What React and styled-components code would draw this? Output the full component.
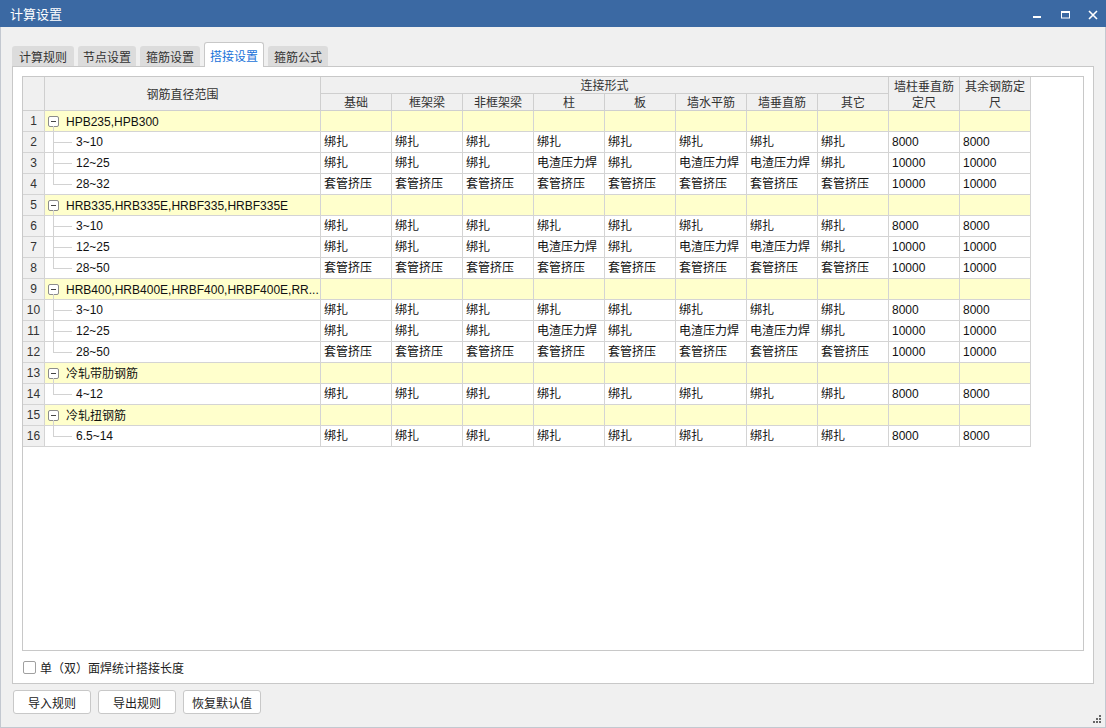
import React from 'react'
import styled, { createGlobalStyle } from 'styled-components';

const GlobalStyle = createGlobalStyle`
  html, body {
    margin: 0;
    padding: 0;
    background: #f0f0f0;
  }
  body {
    font-family: "Liberation Sans", "Noto Sans CJK SC", sans-serif;
    font-size: 12px;
    color: #1e1e1e;
  }
  * { box-sizing: border-box; }
`;

const connectCols = ['基础', '框架梁', '非框架梁', '柱', '板', '墙水平筋', '墙垂直筋', '其它'];

const small = ['绑扎', '绑扎', '绑扎', '绑扎', '绑扎', '绑扎', '绑扎', '绑扎', '8000', '8000'];
const mid = ['绑扎', '绑扎', '绑扎', '电渣压力焊', '绑扎', '电渣压力焊', '电渣压力焊', '绑扎', '10000', '10000'];
const big = ['套管挤压', '套管挤压', '套管挤压', '套管挤压', '套管挤压', '套管挤压', '套管挤压', '套管挤压', '10000', '10000'];

const groups = [
  {
    name: 'HPB235,HPB300',
    rows: [['3~10', small], ['12~25', mid], ['28~32', big]]
  },
  {
    name: 'HRB335,HRB335E,HRBF335,HRBF335E',
    rows: [['3~10', small], ['12~25', mid], ['28~50', big]]
  },
  {
    name: 'HRB400,HRB400E,HRBF400,HRBF400E,RR...',
    rows: [['3~10', small], ['12~25', mid], ['28~50', big]]
  },
  {
    name: '冷轧带肋钢筋',
    rows: [['4~12', small]]
  },
  {
    name: '冷轧扭钢筋',
    rows: [['6.5~14', small]]
  }
];

const tabs = [
  { text: '计算规则', w: 62 },
  { text: '节点设置', w: 58 },
  { text: '箍筋设置', w: 60 },
  { text: '搭接设置', w: 60 },
  { text: '箍筋公式', w: 60 }
];

const App = () => {
  let n = 0;
  return (
    <>
      <GlobalStyle />
      <Window>
        <TitleBar>
          <span>计算设置</span>
          <Controls>
            <svg width="10" height="10" viewBox="0 0 10 10">
              <rect x="1" y="6" width="8" height="2" fill="#fff" />
            </svg>
            <svg width="10" height="10" viewBox="0 0 10 10">
              <rect x="1.5" y="1.5" width="8" height="6.5" fill="none" stroke="#fff" />
              <rect x="1" y="1" width="9" height="2" fill="#fff" />
            </svg>
            <svg width="10" height="10" viewBox="0 0 10 10">
              <path d="M1 1 L9 9 M9 1 L1 9" stroke="#fff" strokeWidth="1.6" />
            </svg>
          </Controls>
        </TitleBar>
        <Body>
          <TabBar>
            {tabs.map((t, i) => (
              <Tab key={t.text} w={t.w} active={i === 3}>{t.text}</Tab>
            ))}
          </TabBar>
          <Panel>
            <Grid>
              <Table>
                <colgroup>
                  <col style={{ width: 22 }} />
                  <col style={{ width: 276 }} />
                  {Array.from({ length: 10 }).map((_, i) => <col key={i} style={{ width: 71 }} />)}
                </colgroup>
                <thead>
                  <tr>
                    <Th rowSpan={2} />
                    <Th rowSpan={2}>钢筋直径范围</Th>
                    <Th colSpan={8}>连接形式</Th>
                    <Th rowSpan={2} wrap>墙柱垂直筋定尺</Th>
                    <Th rowSpan={2} wrap>其余钢筋定尺</Th>
                  </tr>
                  <tr>
                    {connectCols.map(c => <Th key={c}>{c}</Th>)}
                  </tr>
                </thead>
                <tbody>
                  {groups.map(g => {
                    n += 1;
                    const out = [
                      <tr key={'g' + n}>
                        <NumCell>{n}</NumCell>
                        <GroupCell>
                          <ToggleBox />
                          <span>{g.name}</span>
                        </GroupCell>
                        {Array.from({ length: 10 }).map((_, i) => <Cell key={i} group />)}
                      </tr>
                    ];
                    g.rows.forEach(([range, vals], ri) => {
                      n += 1;
                      out.push(
                        <tr key={'r' + n}>
                          <NumCell>{n}</NumCell>
                          <ChildCell last={ri === g.rows.length - 1}>{range}</ChildCell>
                          {vals.map((v, i) => <Cell key={i}>{v}</Cell>)}
                        </tr>
                      );
                    });
                    return out;
                  })}
                </tbody>
              </Table>
            </Grid>
            <CheckRow>
              <CheckBox />
              <span>单（双）面焊统计搭接长度</span>
            </CheckRow>
          </Panel>
          <ButtonRow>
            <Button>导入规则</Button>
            <Button>导出规则</Button>
            <Button>恢复默认值</Button>
          </ButtonRow>
        </Body>
        <Grip width="9" height="9" viewBox="0 0 9 9">
          <rect x="6" y="0" width="2" height="2" fill="#666" />
          <rect x="3" y="3" width="2" height="2" fill="#666" />
          <rect x="6" y="3" width="2" height="2" fill="#666" />
          <rect x="0" y="6" width="2" height="2" fill="#666" />
          <rect x="3" y="6" width="2" height="2" fill="#666" />
          <rect x="6" y="6" width="2" height="2" fill="#666" />
        </Grip>
      </Window>
    </>
  );
}

const Window = styled.div`
  position: relative;
  width: 1106px;
  height: 728px;
  background: #f0f0f0;
  border: 1px solid #c3c8d0;
  border-top: none;
  display: flex;
  flex-direction: column;
`;

const TitleBar = styled.div`
  height: 27px;
  margin: 0 -1px;
  background: #3b69a3;
  color: #fff;
  font-family: "Noto Sans CJK SC", sans-serif;
  font-size: 13px;
  display: flex;
  align-items: center;
  justify-content: space-between;
  padding-left: 10px;
  padding-right: 8px;
`;

const Controls = styled.div`
  display: flex;
  gap: 18px;
  align-items: center;
  padding-top: 2px;
  svg { display: block; }
`;

const Body = styled.div`
  padding: 15px 11px 0 11px;
`;

const TabBar = styled.div`
  display: flex;
  align-items: flex-end;
  gap: 4px;
  height: 24px;
  position: relative;
  z-index: 1;
`;

const Tab = styled.div`
  width: ${p => p.w}px;
  height: ${p => (p.active ? '25px' : '20px')};
  margin-bottom: ${p => (p.active ? '-1px' : '0')};
  background: ${p => (p.active ? '#fff' : '#dcdcdc')};
  border: ${p => (p.active ? '1px solid #c8c8c8' : 'none')};
  border-bottom: none;
  border-radius: 3px 3px 0 0;
  color: ${p => (p.active ? '#1a73d9' : '#333')};
  font-family: "Noto Sans CJK SC", sans-serif;
  font-size: 12px;
  display: flex;
  align-items: center;
  justify-content: center;
  padding-top: ${p => (p.active ? '1px' : '0')};
`;

const Panel = styled.div`
  height: 618px;
  background: #fff;
  border: 1px solid #c8c8c8;
  padding: 9px 9px 0 9px;
  display: flex;
  flex-direction: column;
`;

const Grid = styled.div`
  height: 575px;
  border: 1px solid #c8c8c8;
  background: #fff;
  overflow: hidden;
`;

const Table = styled.table`
  table-layout: fixed;
  width: 1008px;
  border-collapse: separate;
  border-spacing: 0;
`;

const Th = styled.th`
  height: 17px;
  padding: 0 2px;
  background: #f0f0f0;
  border-right: 1px solid #cfcfcf;
  border-bottom: 1px solid #cfcfcf;
  font-weight: normal;
  font-family: "Noto Sans CJK SC", sans-serif;
  font-size: 12px;
  line-height: 16px;
  color: #333;
  text-align: center;
  white-space: ${p => (p.wrap ? 'normal' : 'nowrap')};
  overflow: hidden;
`;

const Cell = styled.td`
  height: 21px;
  max-height: 21px;
  padding: 0 0 0 3px;
  border-right: 1px solid #d4d4d4;
  border-bottom: 1px solid #d4d4d4;
  background: ${p => (p.group ? '#ffffcc' : '#fff')};
  white-space: nowrap;
  overflow: hidden;
  color: #111;
  line-height: 16px;
`;

const NumCell = styled(Cell)`
  background: #f0f0f0;
  text-align: center;
  padding: 0;
  color: #333;
`;

const GroupCell = styled(Cell)`
  position: relative;
  background: #ffffcc;
  padding-left: 3px;
  span { vertical-align: middle; }
  &::after {
    content: '';
    position: absolute;
    left: 8px;
    top: 15px;
    bottom: -1px;
    border-left: 1px solid #d2d2d2;
  }
`;

const ToggleBox = styled.i`
  display: inline-block;
  vertical-align: middle;
  position: relative;
  width: 11px;
  height: 11px;
  margin-right: 7px;
  border: 1px solid #8c8c8c;
  border-radius: 2px;
  background: #fff;
  &::after {
    content: '';
    position: absolute;
    left: 2px;
    right: 2px;
    top: 4px;
    height: 1px;
    background: #444;
  }
`;

const ChildCell = styled(Cell)`
  position: relative;
  padding-left: 31px;
  &::before {
    content: '';
    position: absolute;
    left: 8px;
    top: 0;
    bottom: ${p => (p.last ? '50%' : '-1px')};
    border-left: 1px solid #d2d2d2;
  }
  &::after {
    content: '';
    position: absolute;
    left: 8px;
    width: 19px;
    top: 50%;
    border-top: 1px solid #d2d2d2;
  }
`;

const CheckRow = styled.div`
  display: flex;
  align-items: center;
  gap: 4px;
  height: 31px;
  padding-top: 1px;
  font-family: "Noto Sans CJK SC", sans-serif;
  font-size: 12px;
  color: #222;
`;

const CheckBox = styled.span`
  width: 13px;
  height: 13px;
  border: 1px solid #a0a0a0;
  border-radius: 2px;
  background: #fff;
  margin-left: 1px;
`;

const ButtonRow = styled.div`
  display: flex;
  gap: 7px;
  margin-top: 6px;
  padding-left: 1px;
`;

const Button = styled.button`
  width: 78px;
  height: 24px;
  padding: 0;
  background: #fff;
  border: 1px solid #c8c8c8;
  border-radius: 3px;
  font-family: "Noto Sans CJK SC", sans-serif;
  font-size: 12px;
  color: #222;
`;

const Grip = styled.svg`
  position: absolute;
  right: 3px;
  bottom: 3px;
`;

export default App;
